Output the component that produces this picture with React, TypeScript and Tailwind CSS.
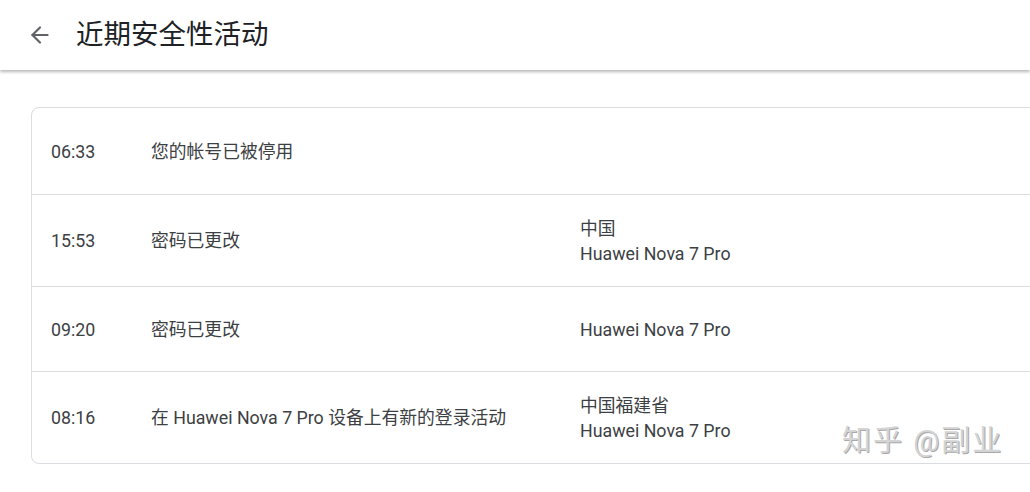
import { ArrowLeft } from 'lucide-react';

type Row = { time: string; event: string; place?: string[]; h: string };

const rows: Row[] = [
  { time: '06:33', event: '您的帐号已被停用', h: 'h-[86px]' },
  { time: '15:53', event: '密码已更改', place: ['中国', 'Huawei Nova 7 Pro'], h: 'h-[92px]' },
  { time: '09:20', event: '密码已更改', place: ['Huawei Nova 7 Pro'], h: 'h-[85px]' },
  { time: '08:16', event: '在 Huawei Nova 7 Pro 设备上有新的登录活动', place: ['中国福建省', 'Huawei Nova 7 Pro'], h: 'h-[92px]' },
];

export default function App() {
  return (
    <div
      className="relative h-[492px] w-[1030px] overflow-hidden bg-white text-[#3c4043]"
      style={{ fontFamily: 'Roboto, "Noto Sans CJK SC", sans-serif' }}
    >
      <header className="relative z-10 flex h-[70px] items-center bg-white shadow-[0_2px_3px_rgba(0,0,0,0.28)]">
        <ArrowLeft className="ml-[27px] text-[#5f6368]" size={26} strokeWidth={2} />
        <h1 className="ml-[23px] text-[27.5px] leading-none text-[#202124]">近期安全性活动</h1>
      </header>

      <main className="pl-[31px] pt-[37px]">
        <div className="w-[1100px] rounded-[8px] border border-[#dadce0]">
          {rows.map((r, i) => (
            <div
              key={i}
              className={`flex items-center text-[17.8px] leading-[25px] ${r.h} ${i > 0 ? 'border-t border-[#dadce0]' : ''}`}
            >
              <span className="w-[119px] shrink-0 pl-[19px]">{r.time}</span>
              <span className="w-[429px] shrink-0">{r.event}</span>
              {r.place && (
                <div className="flex flex-col">
                  {r.place.map(p => (
                    <span key={p}>{p}</span>
                  ))}
                </div>
              )}
            </div>
          ))}
        </div>
      </main>

      <div className="pointer-events-none absolute left-[842px] top-[427px] text-[29px] leading-none tracking-[2px] text-[#d4d4d4] [text-shadow:1px_1px_0_#a8a8a8]">
        知乎 @副业
      </div>
    </div>
  );
}
